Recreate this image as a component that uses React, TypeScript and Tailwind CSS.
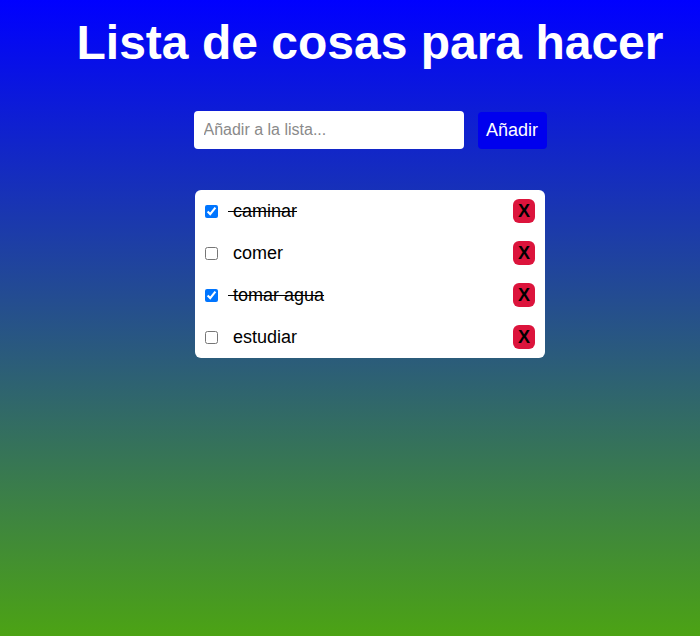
import React, { useState } from "react";

type Item = { id: number; text: string; done: boolean };

export default function App() {
  const [items, setItems] = useState<Item[]>([
    { id: 1, text: "caminar", done: true },
    { id: 2, text: "comer", done: false },
    { id: 3, text: "tomar agua", done: true },
    { id: 4, text: "estudiar", done: false },
  ]);
  const [value, setValue] = useState("");

  const toggle = (id: number) =>
    setItems((xs) => xs.map((x) => (x.id === id ? { ...x, done: !x.done } : x)));
  const remove = (id: number) => setItems((xs) => xs.filter((x) => x.id !== id));
  const add = () => {
    if (!value.trim()) return;
    setItems((xs) => [...xs, { id: Date.now(), text: value.trim(), done: false }]);
    setValue("");
  };

  return (
    <div
      className="min-h-screen bg-[linear-gradient(#0000ff,#4ca314)] pl-10"
      style={{ fontFamily: '"Liberation Sans", Arial, sans-serif' }}
    >
      <h1 className="m-0 pt-[7px] text-center text-[48px] font-bold leading-normal text-white">
        Lista de cosas para hacer
      </h1>
      <div className="mt-[32px] flex items-center justify-center gap-[14px]">
        <input
          value={value}
          onChange={(e) => setValue(e.target.value)}
          placeholder="Añadir a la lista..."
          className="h-[38px] w-[270px] rounded-[4px] bg-white px-[10px] text-[16px] text-black outline-none placeholder:text-[#8a8a8a]"
        />
        <button
          onClick={add}
          className="h-[37px] w-[69px] rounded-[4px] bg-[#0000ee] text-[18px] text-white"
        >
          Añadir
        </button>
      </div>
      <div className="mx-auto mt-[41px] w-[350px] rounded-[6px] bg-white">
        {items.map((it) => (
          <div key={it.id} className="flex h-[42px] items-center pl-[10px] pr-[10px]">
            <input
              type="checkbox"
              checked={it.done}
              onChange={() => toggle(it.id)}
              className="m-0 h-[13px] w-[13px]"
            />
            <span
              className={`ml-[10px] flex-1 whitespace-pre text-[18px] text-black ${
                it.done ? "line-through" : ""
              }`}
            >
              {" " + it.text}
            </span>
            <button
              onClick={() => remove(it.id)}
              className="flex h-[24px] w-[22px] items-center justify-center rounded-[6px] bg-[#dc143c] text-[18px] font-bold text-black"
            >
              X
            </button>
          </div>
        ))}
      </div>
    </div>
  );
}
